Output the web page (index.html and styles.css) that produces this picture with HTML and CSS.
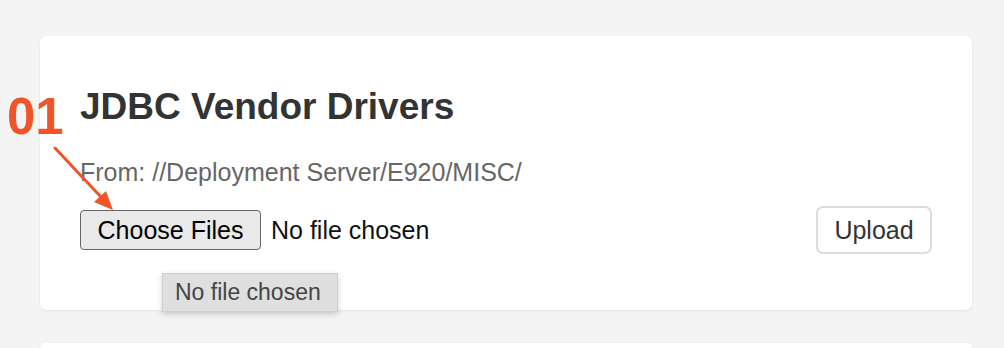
FILE: index.html
```html
<!DOCTYPE html>
<html>
<head>
<meta charset="utf-8">
<link rel="stylesheet" href="styles.css">
</head>
<body>
<div class="page">
  <section class="card">
    <h1 class="title">JDBC Vendor Drivers</h1>
    <p class="from">From: //Deployment Server/E920/MISC/</p>
    <div class="row">
      <div class="file">
        <span class="choose">Choose Files</span>
        <span class="nofile">No file chosen</span>
      </div>
      <button class="upload">Upload</button>
    </div>
    <div class="tooltip">No file chosen</div>
  </section>
  <section class="card card-next"></section>
</div>
<div class="step">01</div>
<svg class="arrow" width="130" height="230" viewBox="0 0 130 230">
  <line x1="55" y1="148" x2="101" y2="197" stroke="#f0552a" stroke-width="3" stroke-linecap="round"/>
  <polygon points="113,210 94,202 106,191" fill="#f0552a"/>
</svg>
</body>
</html>
```
FILE: styles.css
```css
html, body {
  margin: 0;
  padding: 0;
  background: #f4f4f4;
  font-family: "Liberation Sans", Arial, sans-serif;
}
.page {
  padding: 36px 32px 0 40px;
  display: flex;
  flex-direction: column;
  gap: 33px;
}
.card {
  position: relative;
  width: 932px;
  box-sizing: border-box;
  background: #fff;
  border-radius: 7px;
  box-shadow: 0 1px 3px rgba(0,0,0,0.08);
  padding: 52px 40px 0 40px;
  height: 274px;
}
.card-next {
  height: 5px;
  padding: 0;
  border-radius: 7px 7px 0 0;
}
.title {
  margin: 0;
  font-size: 37px;
  line-height: 37px;
  font-weight: bold;
  color: #333;
}
.from {
  margin: 35px 0 0 0;
  font-size: 25px;
  line-height: 25px;
  color: #666;
}
.row {
  margin-top: 21px;
  display: flex;
  align-items: center;
  justify-content: space-between;
  height: 48px;
}
.file {
  display: flex;
  align-items: center;
  gap: 10px;
  font-size: 25px;
  color: #111;
}
.choose {
  box-sizing: border-box;
  height: 40px;
  width: 181px;
  display: flex;
  align-items: center;
  justify-content: center;
  border: 1.5px solid #666;
  border-radius: 4px;
  background: #e9e9e9;
  color: #000;
}
.nofile {
  color: #111;
}
.upload {
  box-sizing: border-box;
  height: 48px;
  width: 116px;
  border: 2px solid #dcdcdc;
  border-radius: 7px;
  background: #fff;
  font-family: "Liberation Sans", Arial, sans-serif;
  font-size: 25px;
  color: #333;
  padding: 0;
}
.tooltip {
  position: absolute;
  left: 122px;
  top: 237px;
  width: 176px;
  height: 39px;
  box-sizing: border-box;
  padding-left: 12px;
  background: #dfdfdf;
  border: 1px solid #cfcfcf;
  box-shadow: 0 2px 6px rgba(0,0,0,0.18);
  font-size: 23px;
  color: #444;
  display: flex;
  align-items: center;
}
.step {
  position: absolute;
  left: 7px;
  top: 91px;
  font-size: 51px;
  line-height: 51px;
  font-weight: bold;
  color: #f0552a;
}
.arrow {
  position: absolute;
  left: 0;
  top: 0;
}
```
